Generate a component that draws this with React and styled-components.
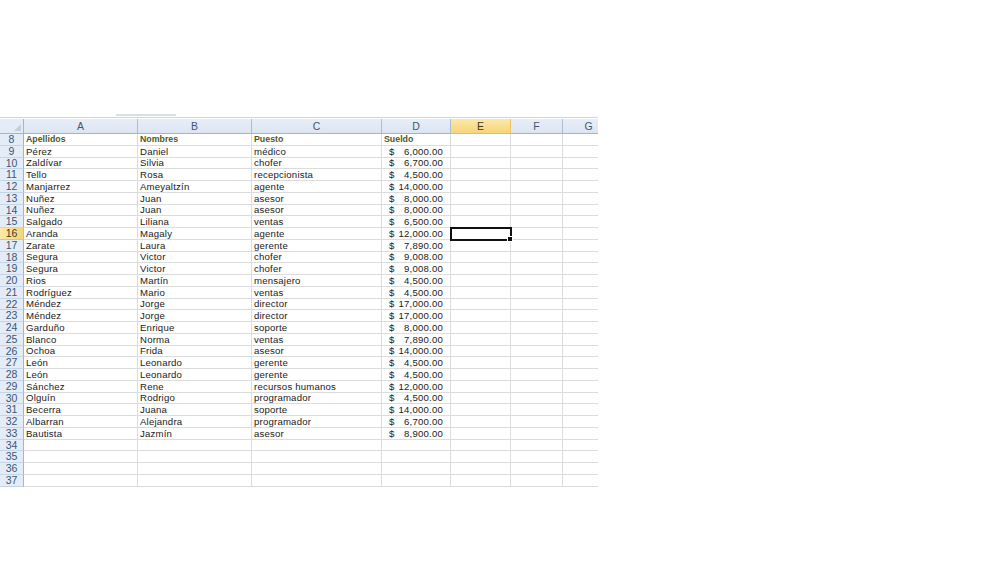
import styled, { createGlobalStyle } from "styled-components";

const GlobalStyle = createGlobalStyle`
  html, body {
    margin: 0;
    padding: 0;
    background: #ffffff;
  }
  * {
    box-sizing: border-box;
  }
`;

const columns = ["A", "B", "C", "D", "E", "F", "G"];

const rows = [
  ["Pérez", "Daniel", "médico", "6,000.00"],
  ["Zaldívar", "Silvia", "chofer", "6,700.00"],
  ["Tello", "Rosa", "recepcionista", "4,500.00"],
  ["Manjarrez", "Ameyaltzín", "agente", "14,000.00"],
  ["Nuñez", "Juan", "asesor", "8,000.00"],
  ["Nuñez", "Juan", "asesor", "8,000.00"],
  ["Salgado", "Liliana", "ventas", "6,500.00"],
  ["Aranda", "Magaly", "agente", "12,000.00"],
  ["Zarate", "Laura", "gerente", "7,890.00"],
  ["Segura", "Victor", "chofer", "9,008.00"],
  ["Segura", "Victor", "chofer", "9,008.00"],
  ["Rios", "Martín", "mensajero", "4,500.00"],
  ["Rodríguez", "Mario", "ventas", "4,500.00"],
  ["Méndez", "Jorge", "director", "17,000.00"],
  ["Méndez", "Jorge", "director", "17,000.00"],
  ["Garduño", "Enrique", "soporte", "8,000.00"],
  ["Blanco", "Norma", "ventas", "7,890.00"],
  ["Ochoa", "Frida", "asesor", "14,000.00"],
  ["León", "Leonardo", "gerente", "4,500.00"],
  ["León", "Leonardo", "gerente", "4,500.00"],
  ["Sánchez", "Rene", "recursos humanos", "12,000.00"],
  ["Olguín", "Rodrigo", "programador", "4,500.00"],
  ["Becerra", "Juana", "soporte", "14,000.00"],
  ["Albarran", "Alejandra", "programador", "6,700.00"],
  ["Bautista", "Jazmín", "asesor", "8,900.00"],
];

const ACTIVE_ROW = 16;
const ACTIVE_COL = "E";

const App = () => {
  const body = [];
  // row 8 holds the table titles
  body.push({ n: 8, header: true, cells: ["Apellidos", "Nombres", "Puesto", "Sueldo"] });
  rows.forEach((r, i) => body.push({ n: 9 + i, cells: r }));
  for (let n = 34; n <= 37; n++) body.push({ n, cells: [] });

  return (
    <Page>
      <GlobalStyle />
      <TopStrip>
        <Tab />
      </TopStrip>
      <Sheet>
        <Corner />
        {columns.map((c) => (
          <ColHead key={c} active={c === ACTIVE_COL}>
            {c}
          </ColHead>
        ))}
        {body.map((row) => (
          <Row key={row.n} row={row} />
        ))}
      </Sheet>
    </Page>
  );
};
export default App;

const Row = ({ row }) => {
  const [a, b, c, d] = row.cells;
  return (
    <>
      <RowHead active={row.n === ACTIVE_ROW}>{row.n}</RowHead>
      <Cell bold={row.header}>{a}</Cell>
      <Cell bold={row.header}>{b}</Cell>
      <Cell bold={row.header}>{c}</Cell>
      {row.header ? (
        <Cell bold>{d}</Cell>
      ) : (
        <Cell>
          {d && (
            <Money>
              <span>$</span>
              <span>{d}</span>
            </Money>
          )}
        </Cell>
      )}
      <Cell selected={row.n === ACTIVE_ROW} />
      <Cell />
      <Cell />
    </>
  );
};

const Page = styled.div`
  width: 1000px;
  height: 562px;
  padding-top: 113px;
  font-family: "Liberation Sans", Arial, sans-serif;
`;

const TopStrip = styled.div`
  width: 598px;
  height: 5px;
  border-bottom: 1px solid #c9d6e6;
`;

const Tab = styled.div`
  margin-left: 116px;
  width: 60px;
  height: 3px;
  border-bottom: 2px solid #d6e0ec;
`;

const Sheet = styled.div`
  display: grid;
  grid-template-columns: 24px 114px 114px 130px 69px 60px 52px 52px;
  grid-template-rows: 15px repeat(30, 11.75px);
  margin-top: 1px;
  width: 598px;
  overflow: hidden;
`;

const Corner = styled.div`
  position: relative;
  background: #e4ecf7;
  border-right: 1px solid #9eb6ce;
  border-bottom: 1px solid #9eb6ce;
  &::after {
    content: "";
    position: absolute;
    right: 2px;
    bottom: 2px;
    border-left: 7px solid transparent;
    border-bottom: 7px solid #c3cfdc;
  }
`;

const ColHead = styled.div`
  display: flex;
  align-items: center;
  justify-content: center;
  font-size: 10.5px;
  color: ${(p) => (p.active ? "#3e3a22" : "#44566e")};
  background: ${(p) =>
    p.active
      ? "linear-gradient(#fce9a8, #f8d479)"
      : "linear-gradient(#e8eef8, #dbe5f1)"};
  border-right: 1px solid ${(p) => (p.active ? "#f2c160" : "#a9bdd3")};
  border-bottom: 1px solid ${(p) => (p.active ? "#f2b94b" : "#9eb6ce")};
`;

const RowHead = styled.div`
  display: flex;
  align-items: center;
  justify-content: center;
  font-size: 10.5px;
  line-height: 1;
  color: ${(p) => (p.active ? "#3e3a22" : "#3b5676")};
  background: ${(p) =>
    p.active ? "linear-gradient(90deg, #fce9a8, #f8d479)" : "#e4ecf7"};
  border-right: 1px solid ${(p) => (p.active ? "#f2b94b" : "#9eb6ce")};
  border-bottom: 1px solid ${(p) => (p.active ? "#f2c160" : "#c5d5e8")};
`;

const Cell = styled.div`
  position: relative;
  display: flex;
  align-items: center;
  padding: 0 2px;
  white-space: nowrap;
  overflow: visible;
  font-size: ${(p) => (p.bold ? "8.8px" : "9.6px")};
  font-weight: ${(p) => (p.bold ? 700 : 400)};
  color: ${(p) => (p.bold ? "#4f5a1e" : "#1a1a1a")};
  letter-spacing: ${(p) => (p.bold ? "0" : "0.2px")};
  border-right: 1px solid #dadcdd;
  border-bottom: 1px solid #dadcdd;
  ${(p) =>
    p.selected &&
    `
    outline: 2px solid #111;
    outline-offset: -1px;
    z-index: 1;
    &::after {
      content: "";
      position: absolute;
      right: -3px;
      bottom: -3px;
      width: 4px;
      height: 4px;
      background: #111;
      border: 1px solid #fff;
    }
  `}
`;

const Money = styled.div`
  display: flex;
  justify-content: space-between;
  width: 100%;
  padding: 0 5px 0 5px;
`;
